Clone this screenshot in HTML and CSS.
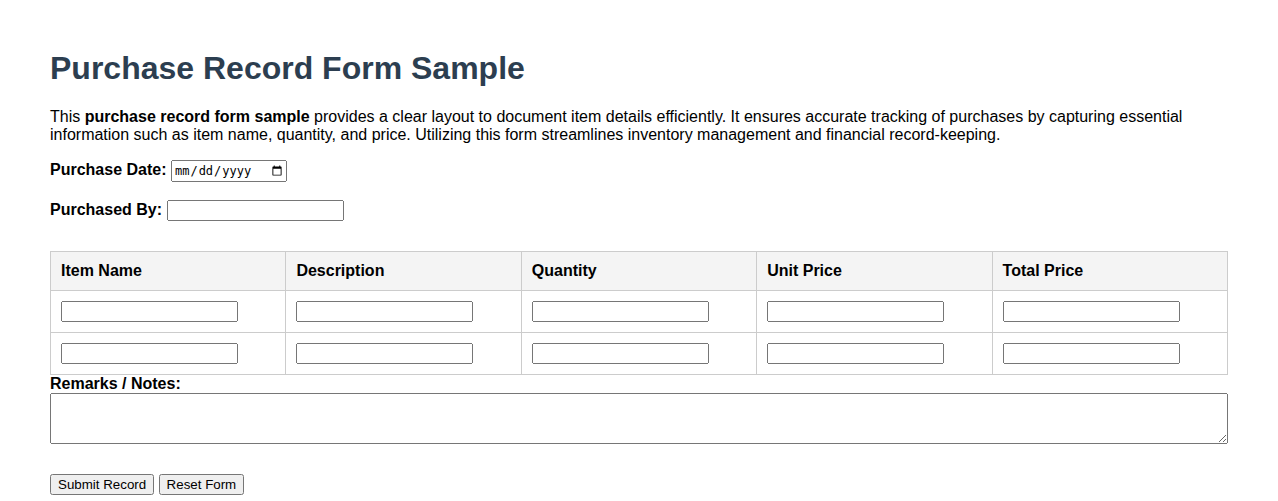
FILE: index.html
```html
<!DOCTYPE html>
<html>
<head>
<meta charset="utf-8">
<link rel="stylesheet" href="styles.css">
</head>
<body>
<div class="page">
  <h1 class="title">Purchase Record Form Sample</h1>
  <p class="intro">This <strong>purchase record form sample</strong> provides a clear layout to document item details efficiently. It ensures accurate tracking of purchases by capturing essential information such as item name, quantity, and price. Utilizing this form streamlines inventory management and financial record-keeping.</p>
  <form class="form">
    <div class="field">
      <label class="label">Purchase Date:</label>
      <input type="date" class="date-input">
    </div>
    <div class="field">
      <label class="label">Purchased By:</label>
      <input type="text" class="text-input">
    </div>
    <table class="items">
      <thead>
        <tr>
          <th>Item Name</th>
          <th>Description</th>
          <th>Quantity</th>
          <th>Unit Price</th>
          <th>Total Price</th>
        </tr>
      </thead>
      <tbody>
        <tr>
          <td><input type="text" class="text-input"></td>
          <td><input type="text" class="text-input"></td>
          <td><input type="text" class="text-input"></td>
          <td><input type="text" class="text-input"></td>
          <td><input type="text" class="text-input"></td>
        </tr>
        <tr>
          <td><input type="text" class="text-input"></td>
          <td><input type="text" class="text-input"></td>
          <td><input type="text" class="text-input"></td>
          <td><input type="text" class="text-input"></td>
          <td><input type="text" class="text-input"></td>
        </tr>
      </tbody>
    </table>
    <label class="label block">Remarks / Notes:</label>
    <textarea class="notes"></textarea>
    <div class="actions">
      <button type="submit" class="btn">Submit Record</button>
      <button type="reset" class="btn">Reset Form</button>
    </div>
  </form>
</div>
</body>
</html>
```
FILE: styles.css
```css
html, body {
  margin: 0;
  padding: 0;
  background: #fff;
}
body {
  font-family: "Liberation Sans", Arial, sans-serif;
  font-size: 16px;
  color: #000;
}
.page {
  padding: 29px 50px 0;
}
.title {
  font-size: 32px;
  font-weight: bold;
  color: #2c3e50;
  margin: 21px 0 21px;
}
.intro {
  margin: 0 0 16px;
  line-height: 18px;
}
.field {
  margin-bottom: 18px;
}
.label {
  font-weight: bold;
}
.label.block {
  display: block;
}
.date-input {
  width: 116px;
  height: 22px;
  box-sizing: border-box;
  font-size: 12px;
}
.text-input {
  width: 177px;
  height: 21px;
  box-sizing: border-box;
}
.items {
  width: 100%;
  border-collapse: collapse;
  table-layout: fixed;
  margin-top: 30px;
}
.items th, .items td {
  border: 1px solid #ccc;
  padding: 10px;
  text-align: left;
}
.items th {
  background: #f4f4f4;
  font-weight: bold;
}
.notes {
  display: block;
  width: 100%;
  height: 51px;
  box-sizing: border-box;
  resize: both;
}
.actions {
  margin-top: 30px;
}
```
